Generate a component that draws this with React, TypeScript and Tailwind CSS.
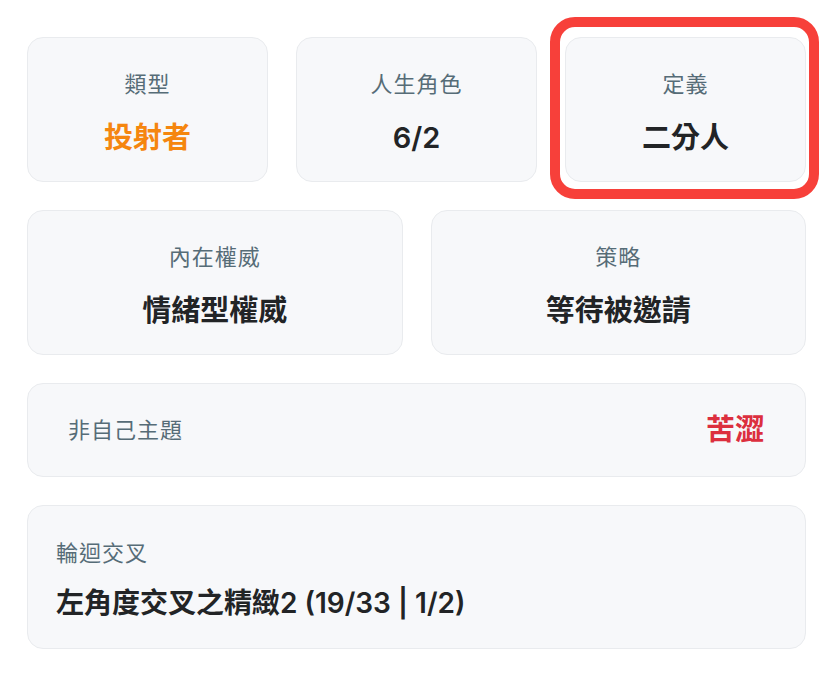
import React from "react";

const font = { fontFamily: 'Inter, "Noto Sans CJK TC", "Noto Sans", sans-serif' };

function StatCard({ label, value, valueClass }: { label: string; value: string; valueClass: string }) {
  return (
    <div className="flex h-[145px] flex-col items-center justify-center gap-[20px] rounded-[16px] border border-[#e9ebee] bg-[#f7f8fa] pt-[9px]">
      <div className="text-[22px] leading-[28px] tracking-[1px] text-[#566c77]">{label}</div>
      <div className={`text-[29px] font-semibold leading-[40px] ${valueClass}`}>{value}</div>
    </div>
  );
}

export default function App() {
  return (
    <div className="min-h-[676px] w-[835px] bg-white" style={font}>
      <div className="flex flex-col gap-[28px] pl-[27px] pr-[29px] pt-[37px]">
        <div className="grid grid-cols-3 gap-[28px]">
          <StatCard label="類型" value="投射者" valueClass="text-[#f5860f]" />
          <StatCard label="人生角色" value="6/2" valueClass="text-[#222426]" />
          <div className="relative">
            <StatCard label="定義" value="二分人" valueClass="text-[#222426]" />
            <div className="pointer-events-none absolute -top-[20px] -bottom-[17px] -left-[15px] -right-[13px] rounded-[25px] border-[10px] border-[#f7403a]" />
          </div>
        </div>
        <div className="grid grid-cols-2 gap-[28px]">
          <StatCard label="內在權威" value="情緒型權威" valueClass="text-[#222426]" />
          <StatCard label="策略" value="等待被邀請" valueClass="text-[#222426]" />
        </div>
        <div className="flex h-[94px] items-center justify-between rounded-[16px] border border-[#e9ebee] bg-[#f7f8fa] pl-[40px] pr-[41px]">
          <div className="text-[22px] leading-[28px] tracking-[1px] text-[#566c77]">非自己主題</div>
          <div className="text-[29px] font-semibold leading-[40px] text-[#dc2f3e]">苦澀</div>
        </div>
        <div className="flex h-[144px] flex-col justify-center gap-[18px] rounded-[16px] border border-[#e9ebee] bg-[#f7f8fa] pl-[28px] pt-[6px]">
          <div className="text-[22px] leading-[28px] tracking-[1px] text-[#566c77]">輪迴交叉</div>
          <div className="text-[28px] font-semibold leading-[36px] text-[#222426]">左角度交叉之精緻2 (19/33 | 1/2)</div>
        </div>
      </div>
    </div>
  );
}
